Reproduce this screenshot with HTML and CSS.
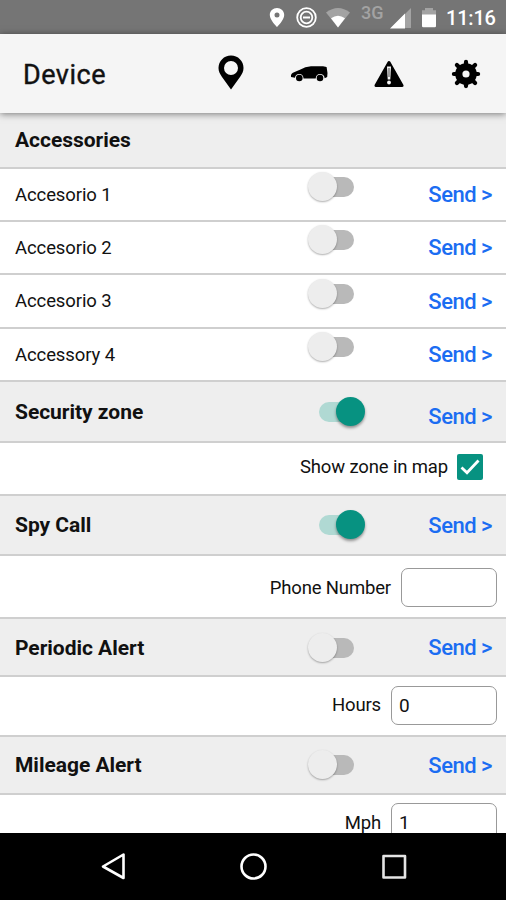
FILE: index.html
```html
<!DOCTYPE html>
<html lang="en">
<head>
<meta charset="utf-8">
<title>Device</title>
<link rel="stylesheet" href="styles.css">
</head>
<body>
<div class="status">
  <svg class="status-icons" width="170" height="34" viewBox="0 0 170 34">
    <path fill="#fff" fill-rule="evenodd" d="M7 8c-4 0-7.200 3-7.200 7 0 5 7.200 12 7.200 12s7.200-7 7.200-12c0-4-3.200-7-7.200-7zm0 4.500a2.500 2.500 0 1 1 0 5 2.500 2.500 0 0 1 0-5z"/>
    <g fill="none" stroke="#fff"><circle cx="36.500" cy="17.500" r="9.300" stroke-width="1.800"/><circle cx="36.500" cy="17.500" r="5.800" stroke-width="1.800"/><path stroke-width="2" d="M33 17.500h7"/></g>
    <path fill="#a3a3a3" d="M56 12.500q12-9 24 0L68 27.500z"/>
    <path fill="#fff" d="M61 18.300q7-5 14 0l-7 9.200z"/>
    <path fill="#a3a3a3" d="M141 8v20h-20z"/>
    <path fill="#fff" d="M135 13.500V28.500h-15z"/>
    <path fill="#a3a3a3" d="M155 8h8v2.300h3V15h-14v-4.700h3z"/>
    <path fill="#fff" d="M152 14.500h14V26q0 1.300-1.300 1.300h-11.400Q152 27.300 152 26z"/>
  </svg>
  <span class="network">3G</span>
  <span class="clock">11:16</span>
</div>
<header class="header">
  <h1>Device</h1>
  <svg class="icon pin" width="26" height="36" viewBox="0 0 26 36"><path fill-rule="evenodd" d="M13 .5C6 .5.500 6 .500 13c0 3.500 1.500 6 3.500 9l9 12.500 9-12.500c2-3 3.500-5.500 3.500-9C25.500 6 20 .500 13 .500zm0 5.500a7 7 0 1 1 0 14 7 7 0 0 1 0-14z"/></svg>
  <svg class="icon car" width="38" height="18" viewBox="0 0 38 18"><path d="M1 11.500Q.500 8.500 4 7.200L10.500 4.500Q15 1.500 21 1.200h12l3.600.8L37.500 8l-.3 4-2.500 1.200Q34 9 30 9t-4.300 4.500H13.500Q13.300 9 9.300 9T5 12.800L1 12z"/><circle cx="9.300" cy="13" r="3.300"/><circle cx="30" cy="13" r="3.300"/></svg>
  <svg class="icon alert" width="30" height="28" viewBox="0 0 30 28"><path d="M15 2.500 28 25.500H2z" stroke="#000" stroke-width="3" stroke-linejoin="round"/><path fill="#f5f5f5" d="M13 6.500h4l-.7 13h-2.600z"/><path d="M14.300 8h1.400v9h-1.400z" fill="#777"/><circle cx="15" cy="22.500" r="1.900" fill="#f5f5f5"/></svg>
  <svg class="icon gear" width="30" height="30" viewBox="-15 -15 30 30"><circle r="7.200" fill="none" stroke="#000" stroke-width="7.200"/><g stroke="#000" stroke-width="4.200" stroke-linecap="round"><path d="M0-9v-3.100M0 9v3.100M-9 0h-3.100M9 0h3.100M-7-7l-2.100-2.100M7-7l2.100-2.100M-7 7l-2.100 2.100M7 7l2.100 2.100"/></g></svg>
</header>
<main class="list">
  <section class="row title-row"><h2>Accessories</h2></section>
  <div class="row accessory"><span class="name">Accesorio 1</span><i class="toggle"></i><a class="send">Send &gt;</a></div>
  <div class="row accessory"><span class="name">Accesorio 2</span><i class="toggle"></i><a class="send">Send &gt;</a></div>
  <div class="row accessory tall"><span class="name">Accesorio 3</span><i class="toggle"></i><a class="send">Send &gt;</a></div>
  <div class="row accessory"><span class="name">Accessory 4</span><i class="toggle"></i><a class="send">Send &gt;</a></div>
  <div class="row section zone"><h2>Security zone</h2><i class="toggle on"></i><a class="send">Send &gt;</a></div>
  <div class="row field zone-field"><label>Show zone in map</label><svg class="check" width="26" height="26" viewBox="0 0 26 26"><rect width="26" height="26" rx="2" fill="#079281"/><path d="m4.500 13.500 5.500 5.200L21.500 6.500" fill="none" stroke="#fff" stroke-width="2.800"/></svg></div>
  <div class="row section spy"><h2>Spy Call</h2><i class="toggle on"></i><a class="send">Send &gt;</a></div>
  <div class="row field phone"><label>Phone Number</label><span class="input short"></span></div>
  <div class="row section periodic"><h2>Periodic Alert</h2><i class="toggle"></i><a class="send">Send &gt;</a></div>
  <div class="row field hours"><label>Hours</label><span class="input">0</span></div>
  <div class="row section mileage"><h2>Mileage Alert</h2><i class="toggle"></i><a class="send">Send &gt;</a></div>
  <div class="row field mph"><label>Mph</label><span class="input">1</span></div>
</main>
<nav class="nav">
  <svg width="506" height="67" viewBox="0 0 506 67" fill="none" stroke="#fff" stroke-width="2.600" stroke-linejoin="round"><path d="M123.500 21.500v23.500L103 33.500z"/><circle cx="253.500" cy="33.500" r="12"/><rect x="383.500" y="23" width="21.500" height="21.500" stroke="#e4e4e4"/></svg>
</nav>
</body>
</html>
```

FILE: styles.css
```css
* { box-sizing: border-box; }
body {
  margin: 0;
  width: 506px;
  height: 900px;
  overflow: hidden;
  display: flex;
  flex-direction: column;
  background: #fff;
  color: #111;
  font-family: Roboto, "Liberation Sans", sans-serif;
}
h1, h2 { margin: 0; }
.status {
  position: relative;
  flex: 0 0 34px;
  display: flex;
  align-items: center;
  padding-left: 270px;
  background: #757575;
  color: #fff;
}
.status-icons { flex: none; overflow: visible; }
.network {
  position: absolute;
  left: 361px;
  top: 2px;
  font-size: 18px;
  font-weight: 500;
  line-height: 21px;
  color: #a3a3a3;
}
.clock { margin: 2px 0 0 6px; font-size: 20px; font-weight: 500; letter-spacing: -.2px; }
.header {
  position: relative;
  z-index: 1;
  flex: 0 0 79px;
  display: flex;
  align-items: center;
  padding-left: 23px;
  background: #f5f5f5;
  box-shadow: 0 1px 7px rgba(0, 0, 0, .5);
}
h1 { width: 194.500px; padding-top: 3px; font-size: 27px; font-weight: 400; letter-spacing: .5px; -webkit-text-stroke: .4px #111; }
.icon { flex: none; }
.pin { margin-top: -1px; }
.car { margin-left: 46px; }
.alert { margin: 1px 0 0 46px; }
.gear { margin-left: 47.500px; }
.list { flex: 1; min-height: 0; overflow: hidden; }
.row {
  display: flex;
  align-items: center;
  height: 53px;
  padding: 0 14px 0 15px;
  border-bottom: 2px solid #cfcfcf;
}
.tall { height: 54px; }
.title-row { height: 56px; background: #eee; }
.section { background: #eee; }
h2 { width: 293px; font-size: 21px; font-weight: 700; letter-spacing: -.03px; }
.name { width: 293px; font-size: 18.500px; letter-spacing: -.1px; }
.toggle {
  position: relative;
  flex: none;
  width: 46px;
  height: 30px;
}
.toggle::before {
  content: "";
  position: absolute;
  inset: 5px 0 5px 4px;
  border-radius: 10px;
  background: #b9b9b9;
}
.toggle::after {
  content: "";
  position: absolute;
  left: 0;
  top: 0;
  width: 29px;
  height: 29px;
  border-radius: 50%;
  background: #ededed;
  box-shadow: 0 1px 2px rgba(0, 0, 0, .32);
}
.on { margin-left: 11px; }
.on::before { inset: 5px 4px 5px 0; background: #b0d9d3; }
.on::after { left: 17px; background: #079281; box-shadow: 0 2px 3px rgba(0, 0, 0, .4); }
.accessory .toggle { margin-bottom: 15px; }
.send { margin-left: auto; color: #1b6df2; font-size: 22px; font-weight: 500; letter-spacing: -.5px; white-space: nowrap; }
.zone { height: 61px; }
.zone .send { margin-top: 10px; }
.spy { height: 60px; }
.field { justify-content: flex-end; padding-right: 9px; }
label { font-size: 18.500px; letter-spacing: -.15px; }
.check { margin: 0 14px 0 9px; }
.zone-field { padding-bottom: 4px; }
.phone { height: 63px; padding-top: 2px; }
.periodic { height: 58px; }
.periodic .toggle, .periodic h2, .periodic .send { margin-top: 1px; }
.hours { height: 60px; padding-bottom: 2px; }
.mileage { height: 58px; }
.mph { height: 55px; border: 0; }
.input {
  width: 106px;
  height: 39px;
  margin-left: 10px;
  padding-left: 7px;
  border: 1.500px solid #999;
  border-radius: 7px;
  font-size: 19px;
  line-height: 38px;
}
.short { width: 96px; }
.nav { position: relative; flex: 0 0 67px; background: #000; }
.nav svg { display: block; }
```
